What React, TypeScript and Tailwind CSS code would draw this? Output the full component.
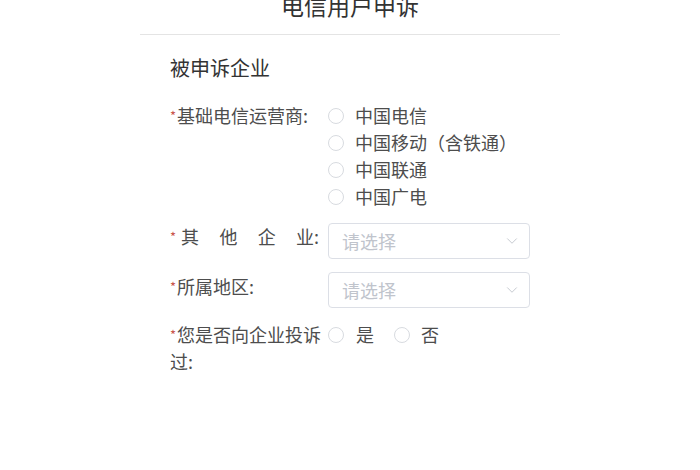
import { ChevronDown } from "lucide-react";

const FONT = { fontFamily: '"Noto Sans CJK SC", "Noto Sans", sans-serif' };

function Radio({ label, gap = "mr-[11px]" }: { label: string; gap?: string }) {
  return (
    <label className="flex items-center h-[27px]">
      <span className={`w-4 h-4 rounded-full border border-[#d8dbe0] bg-white shrink-0 ${gap}`} />
      <span className="text-[18px] leading-[27px] text-[#4d4d4d]">{label}</span>
    </label>
  );
}

function Star() {
  return <span className="text-[#c9554c] text-[13px] align-top mr-[1px]">*</span>;
}

function Select() {
  return (
    <div className="w-[202px] h-[36px] rounded border border-[#dcdfe6] flex items-center justify-between pl-[13px] pr-[8px]">
      <span className="text-[18px] text-[#c0c4cc]">请选择</span>
      <ChevronDown className="w-[18px] h-[18px] text-[#c0c4cc]" strokeWidth={1.2} />
    </div>
  );
}

export default function App() {
  return (
    <div className="w-full h-[470px] bg-white flex justify-center overflow-hidden" style={FONT}>
      <div className="w-[420px]">
        {/* 标题 */}
        <div className="h-[35px] border-b border-[#e4e4e4] flex flex-col">
          <h1 className="-mt-[8px] text-center text-[23px] leading-[26px] text-[#333]">电信用户申诉</h1>
        </div>

        <div className="px-[30px] pt-[19px]">
          <h2 className="text-[20px] leading-[28px] text-[#333]">被申诉企业</h2>

          <div className="mt-[20px] flex flex-col gap-[13px]">
            {/* 基础电信运营商 */}
            <div className="flex gap-[2px]">
              <div className="w-[156px] text-[18px] leading-[27px] text-[#4d4d4d]">
                <Star />基础电信运营商:
              </div>
              <div className="flex flex-col">
                <Radio label="中国电信" />
                <Radio label="中国移动（含铁通）" />
                <Radio label="中国联通" />
                <Radio label="中国广电" />
              </div>
            </div>

            {/* 其他企业 */}
            <div className="flex gap-[2px]">
              <div className="w-[156px] flex text-[18px] leading-[27px] text-[#4d4d4d]">
                <Star />
                <span className="flex-1 flex justify-between pl-[4px] pr-[7px]">
                  <span>其</span>
                  <span>他</span>
                  <span>企</span>
                  <span>业:</span>
                </span>
              </div>
              <Select />
            </div>

            {/* 所属地区 */}
            <div className="flex gap-[2px]">
              <div className="w-[156px] text-[18px] leading-[27px] text-[#4d4d4d] pt-[1px]">
                <Star />所属地区:
              </div>
              <Select />
            </div>

            {/* 是否投诉过 */}
            <div className="flex gap-[2px]">
              <div className="w-[156px] text-[18px] leading-[27px] text-[#4d4d4d]">
                <Star />您是否向企业投诉过:
              </div>
              <div className="flex items-start">
                <Radio label="是" gap="mr-[12px]" />
                <span className="w-[20px]" />
                <Radio label="否" gap="mr-[11px]" />
              </div>
            </div>
          </div>
        </div>
      </div>
    </div>
  );
}
